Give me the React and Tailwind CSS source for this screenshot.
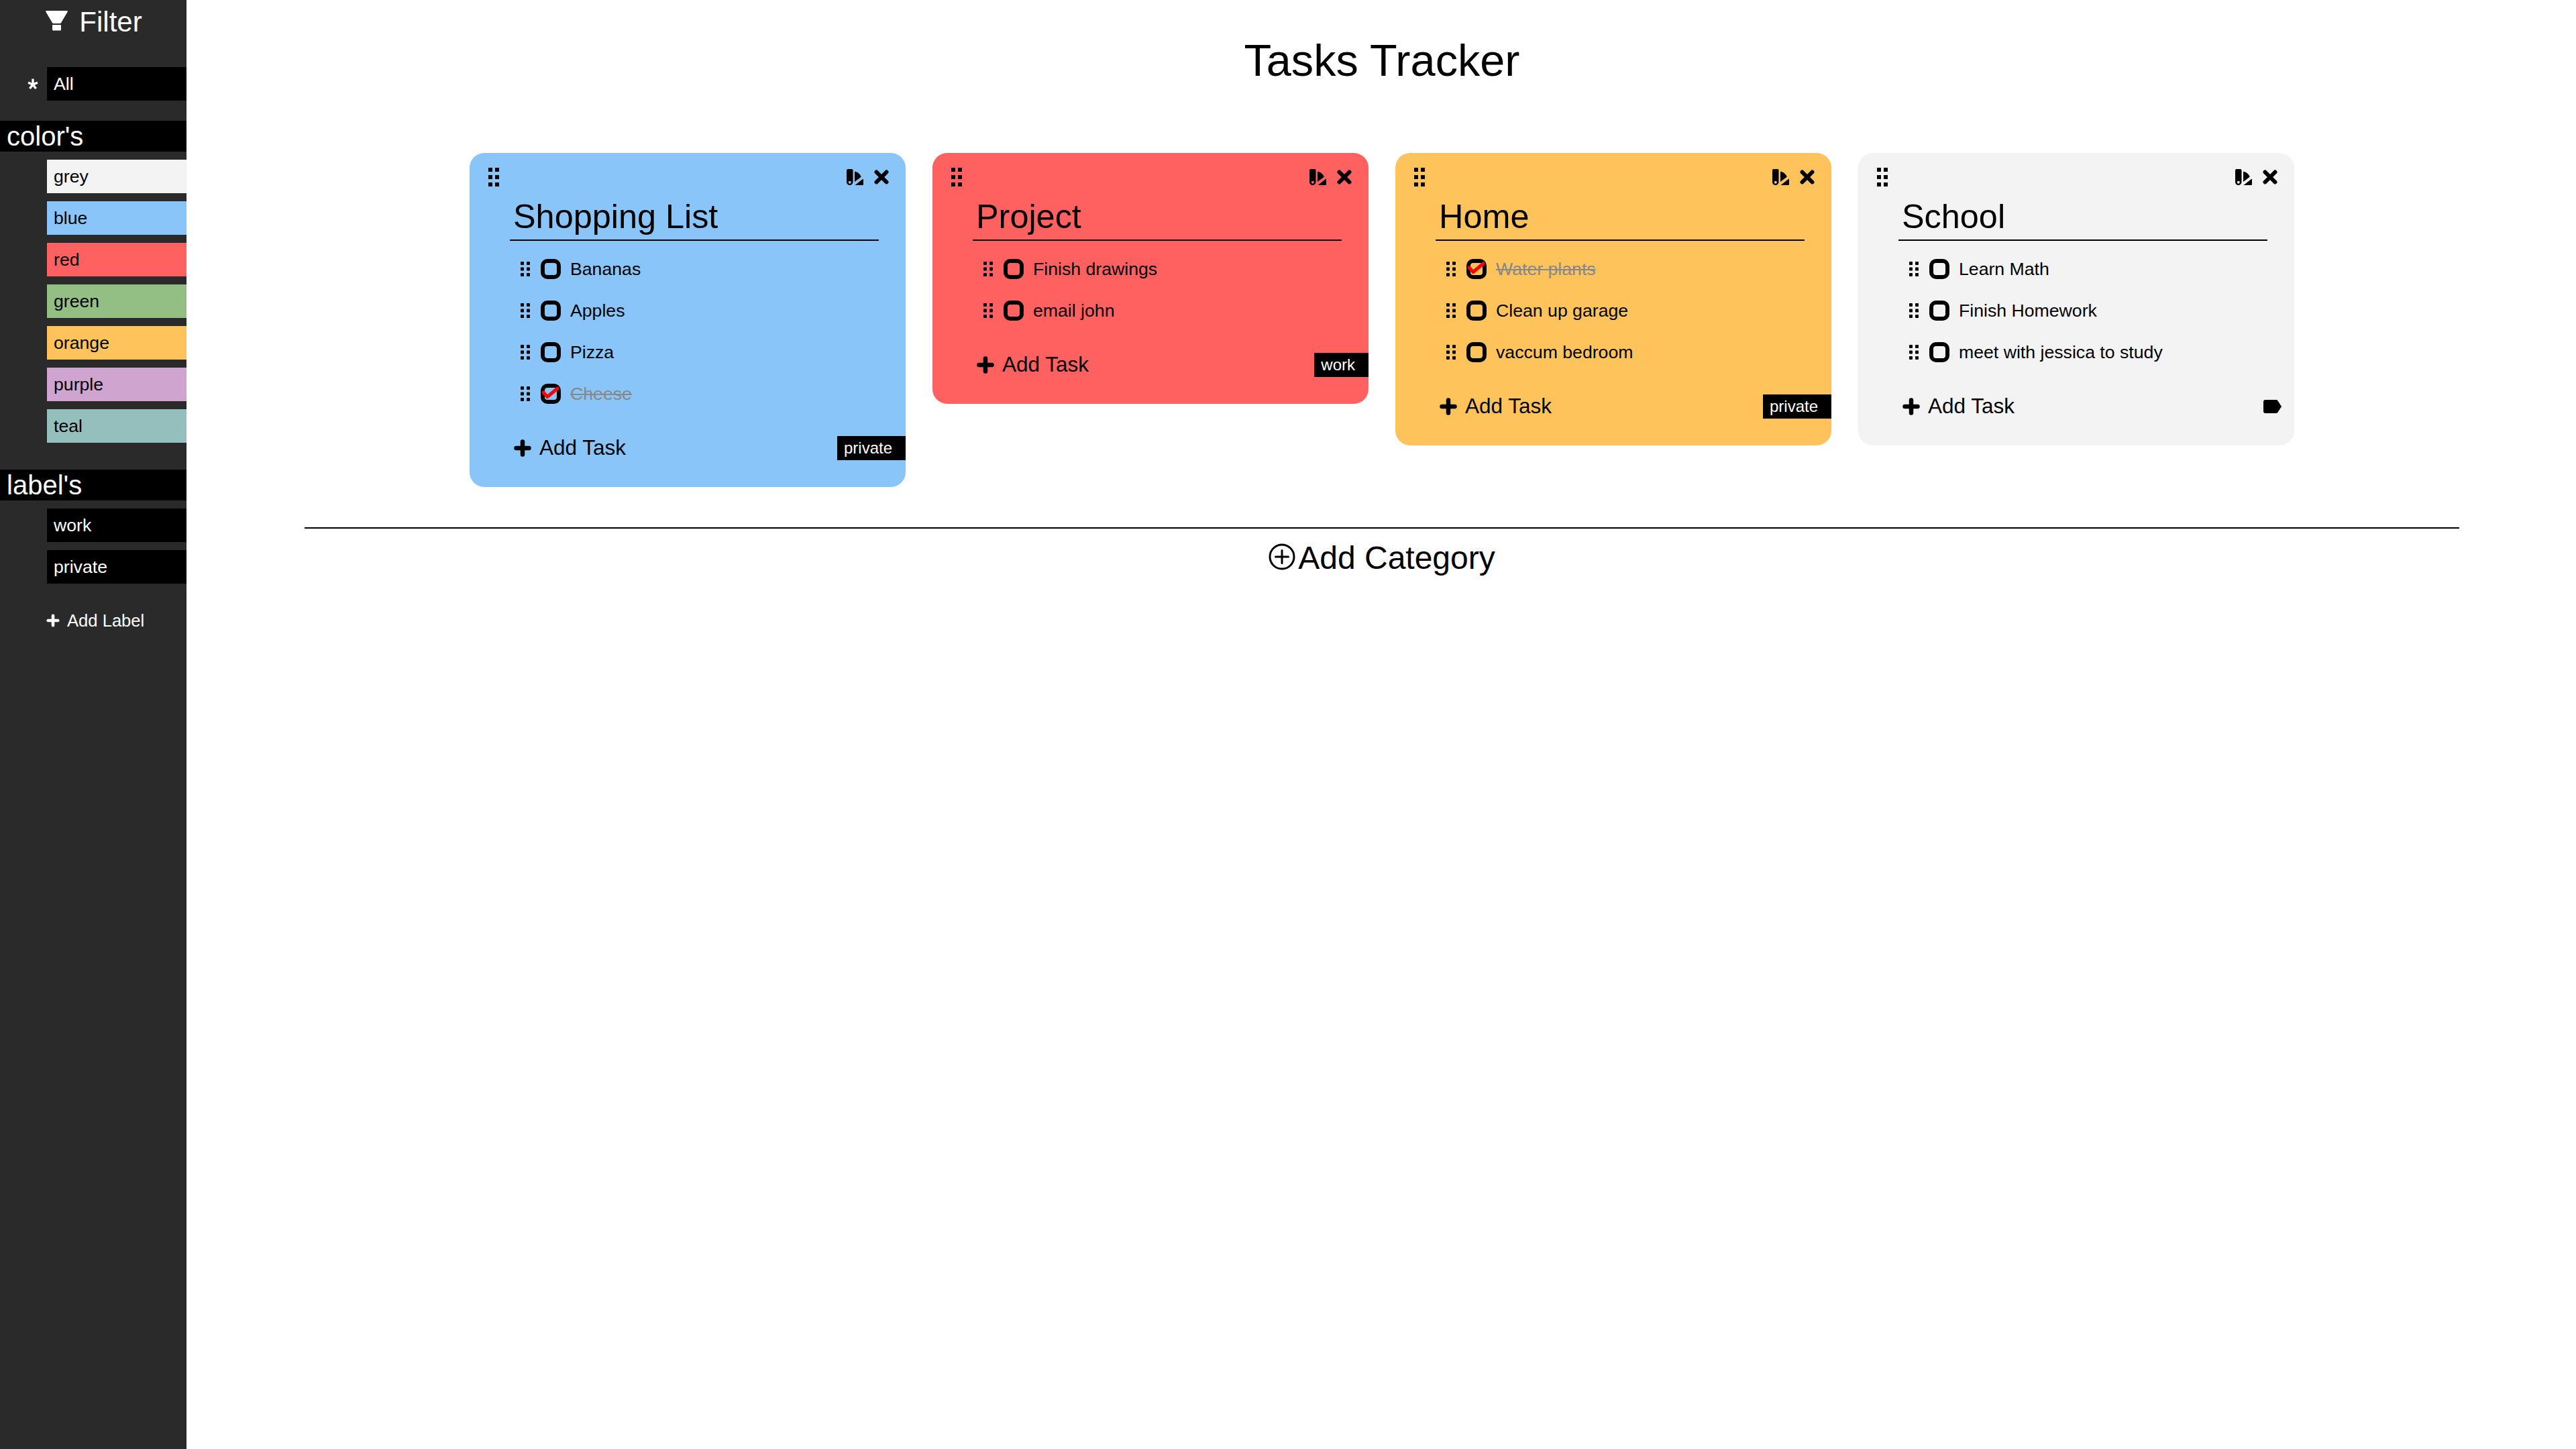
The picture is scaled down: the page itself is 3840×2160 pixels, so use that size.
const colors = [
  { name: 'grey', bg: 'bg-[#f3f3f3]' },
  { name: 'blue', bg: 'bg-[#89c5f9]' },
  { name: 'red', bg: 'bg-[#ff6060]' },
  { name: 'green', bg: 'bg-[#93bf85]' },
  { name: 'orange', bg: 'bg-[#ffc35b]' },
  { name: 'purple', bg: 'bg-[#cfa5cf]' },
  { name: 'teal', bg: 'bg-[#95bfbd]' },
];

const categories = [
  {
    title: 'Shopping List',
    bg: 'bg-[#89c5f9]',
    label: 'private',
    tasks: [
      { text: 'Bananas' },
      { text: 'Apples' },
      { text: 'Pizza' },
      { text: 'Cheese', done: true },
    ],
  },
  {
    title: 'Project',
    bg: 'bg-[#ff6060]',
    label: 'work',
    tasks: [{ text: 'Finish drawings' }, { text: 'email john' }],
  },
  {
    title: 'Home',
    bg: 'bg-[#ffc35b]',
    label: 'private',
    tasks: [
      { text: 'Water plants', done: true },
      { text: 'Clean up garage' },
      { text: 'vaccum bedroom' },
    ],
  },
  {
    title: 'School',
    bg: 'bg-[#f3f3f3]',
    tasks: [
      { text: 'Learn Math' },
      { text: 'Finish Homework' },
      { text: 'meet with jessica to study' },
    ],
  },
];

const DragDots = ({ className }) => (
  <svg viewBox="0 0 14 22" className={className} fill="currentColor">
    <rect x="0" y="0" width="5" height="5" rx="1" />
    <rect x="9" y="0" width="5" height="5" rx="1" />
    <rect x="0" y="8.5" width="5" height="5" rx="1" />
    <rect x="9" y="8.5" width="5" height="5" rx="1" />
    <rect x="0" y="17" width="5" height="5" rx="1" />
    <rect x="9" y="17" width="5" height="5" rx="1" />
  </svg>
);

const CardDragDots = () => (
  <svg viewBox="0 0 16 28" className="w-[16px] h-[28px]" fill="currentColor">
    <rect x="0" y="0" width="6" height="6" />
    <rect x="10" y="0" width="6" height="6" />
    <rect x="0" y="11" width="6" height="6" />
    <rect x="10" y="11" width="6" height="6" />
    <rect x="0" y="22" width="6" height="6" />
    <rect x="10" y="22" width="6" height="6" />
  </svg>
);

const FunnelIcon = () => (
  <svg viewBox="0 0 33 30" className="w-[33px] h-[30px]" fill="#fff">
    <path d="M1 0 H32 C33 0 33 1 32.5 2 L23 18 C22.6 18.7 22 19 21 19 H12 C11 19 10.4 18.7 10 18 L0.5 2 C0 1 0 0 1 0 Z" />
    <path d="M10 21 H23 V28 C23 29 22.4 29.5 21.5 29.5 H11.5 C10.6 29.5 10 29 10 28 Z" />
  </svg>
);

const SwatchIcon = () => (
  <svg viewBox="0 0 25 24" className="w-[25px] h-[24px]" fill="#000">
    <path
      fillRule="evenodd"
      d="M2 0 H7.5 C8.8 0 9.5 0.8 9.5 2 V19 C9.5 21.8 7.5 24 4.8 24 C2 24 0 21.8 0 19 V2 C0 0.8 0.8 0 2 0 Z M4.8 17.8 A2 2 0 1 0 4.8 21.8 A2 2 0 1 0 4.8 17.8 Z"
    />
    <path d="M12 5 C12 4 12.8 3.6 13.8 4 C17 5.2 20 7.6 21.4 10.4 C21.7 11 21.6 11.6 21 12.2 L12 19 Z" />
    <path d="M12.5 24 L24 15 C24.5 14.6 25 14.9 25 15.5 V22.5 C25 23.5 24.5 24 23.5 24 Z" />
  </svg>
);

const CloseIcon = () => (
  <svg viewBox="0 0 22 22" className="w-[22px] h-[22px]" fill="none" stroke="#000" strokeWidth="6" strokeLinecap="round">
    <path d="M3.5 3.5 L18.5 18.5 M18.5 3.5 L3.5 18.5" />
  </svg>
);

const PlusIcon = ({ className, weight }) => (
  <svg viewBox="0 0 26 26" className={className} fill="none" stroke="currentColor" strokeWidth={weight} strokeLinecap="round">
    <path d="M13 3.5 V22.5 M3.5 13 H22.5" />
  </svg>
);

const LabelIcon = () => (
  <svg viewBox="0 0 27 20" className="w-[27px] h-[20px] mr-[19px]" fill="#000">
    <path d="M3 0 H19 C20 0 20.8 0.4 21.4 1.2 L27 10 L21.4 18.8 C20.8 19.6 20 20 19 20 H3 C1.2 20 0 18.8 0 17 V3 C0 1.2 1.2 0 3 0 Z" />
  </svg>
);

const StarIcon = () => (
  <svg viewBox="0 0 16 16" className="absolute left-[41px] top-[17px] w-[16px] h-[16px]" fill="none" stroke="#fff" strokeWidth="3.4">
    <path d="M8 0.5 V9 M8 9 L1 6.2 M8 9 L15 6.2 M8 9 L3.4 15 M8 9 L12.6 15" />
  </svg>
);

const CheckBox = ({ done }) => (
  <svg viewBox="0 0 30 30" className="w-[30px] h-[30px] shrink-0" fill="none">
    <rect x="3" y="3" width="24" height="24" rx="7" stroke="#000" strokeWidth="6" />
    {done && (
      <path d="M4 13 L10 19.5 L25 7" stroke="#ff0000" strokeWidth="5" strokeLinecap="round" strokeLinejoin="round" />
    )}
  </svg>
);

const PlusCircle = () => (
  <svg viewBox="0 0 40 40" className="w-[40px] h-[40px] -mt-[4px]" fill="none" stroke="#000" strokeWidth="3">
    <circle cx="20" cy="20" r="18" />
    <path d="M20 10.5 V29.5 M10.5 20 H29.5" strokeLinecap="round" />
  </svg>
);

// One row in the sidebar, indented past the star column
const SideRow = ({ bg, text, children }) => (
  <div className={`h-[50px] ml-[70px] pl-[10px] flex items-center text-[26.67px] ${bg} ${text}`}>{children}</div>
);

const SideHeading = ({ children }) => (
  <div className="h-[46px] bg-black text-white text-[40px] leading-[46px] pl-[10px]">{children}</div>
);

const Task = ({ task }) => (
  <div className="h-[62px] pl-[76px] flex items-center">
    <DragDots className="w-[14px] h-[22px] shrink-0" />
    <div className="ml-[16px]">
      <CheckBox done={task.done} />
    </div>
    <span className={`ml-[14px] text-[26.67px] ${task.done ? 'text-[#888] line-through' : 'text-black'}`}>{task.text}</span>
  </div>
);

const Card = ({ category }) => (
  <div className={`w-[650px] rounded-[22px] pt-[22px] pb-[40px] text-black ${category.bg}`}>
    <div className="h-[28px] pl-[28px] pr-[25px] flex items-center justify-between">
      <CardDragDots />
      <div className="flex items-center gap-[16px]">
        <SwatchIcon />
        <CloseIcon />
      </div>
    </div>
    <div className="mt-[17px] ml-[60px] mr-[40px] pl-[5px] pb-[6px] border-b-[2px] border-black text-[50.4px] leading-[56px]">
      {category.title}
    </div>
    <div className="mt-[11px]">
      {category.tasks.map((task) => (
        <Task key={task.text} task={task} />
      ))}
    </div>
    <div className="mt-[32px] h-[36px] pl-[66px] flex items-center justify-between">
      <div className="flex items-center gap-[12px] text-[31.5px]">
        <PlusIcon className="w-[26px] h-[26px]" weight="6.5" />
        <span>Add Task</span>
      </div>
      {category.label ? (
        <div className="h-[36px] pl-[10px] pr-[20px] bg-black text-white text-[24px] leading-[36px]">{category.label}</div>
      ) : (
        <LabelIcon />
      )}
    </div>
  </div>
);

export default function App() {
  return (
    <div className="flex min-h-screen bg-white font-['Liberation_Sans',Arial,sans-serif]">
      {/* Sidebar */}
      <aside className="w-[278px] shrink-0 bg-[#2a2a2a] text-white">
        <div className="h-[66px] pt-[16px] pl-[2px] flex items-start justify-center gap-[17px] text-[42px] leading-[34px]">
          <FunnelIcon />
          <span>Filter</span>
        </div>
        <div className="mt-[34px] relative">
          <StarIcon />
          <SideRow bg="bg-black" text="text-white">All</SideRow>
        </div>
        <div className="mt-[30px]">
          <SideHeading>color's</SideHeading>
        </div>
        <div className="mt-[12px] flex flex-col gap-[12px]">
          {colors.map((color) => (
            <SideRow key={color.name} bg={color.bg} text="text-black">
              {color.name}
            </SideRow>
          ))}
        </div>
        <div className="mt-[40px]">
          <SideHeading>label's</SideHeading>
        </div>
        <div className="mt-[12px] flex flex-col gap-[12px]">
          <SideRow bg="bg-black" text="text-white">work</SideRow>
          <SideRow bg="bg-black" text="text-white">private</SideRow>
        </div>
        <div className="mt-[40px] ml-[69px] h-[30px] flex items-center gap-[11px] text-[25.6px]">
          <PlusIcon className="w-[20px] h-[20px]" weight="6" />
          <span>Add Label</span>
        </div>
      </aside>

      {/* Main Content Area */}
      <main className="flex-1 pl-[2px] text-black">
        <h1 className="mt-[52px] text-center text-[66.67px] leading-[76px]">Tasks Tracker</h1>
        <div className="mt-[100px] flex justify-center items-start gap-[40px]">
          {categories.map((category) => (
            <Card key={category.title} category={category} />
          ))}
        </div>
        <div className="mt-[60px] mx-auto w-[3212px] border-t-[2px] border-black" />
        <div className="mt-[16px] flex items-center justify-center gap-[4px] text-[48px] leading-[56px]">
          <PlusCircle />
          <span>Add Category</span>
        </div>
      </main>
    </div>
  );
}
